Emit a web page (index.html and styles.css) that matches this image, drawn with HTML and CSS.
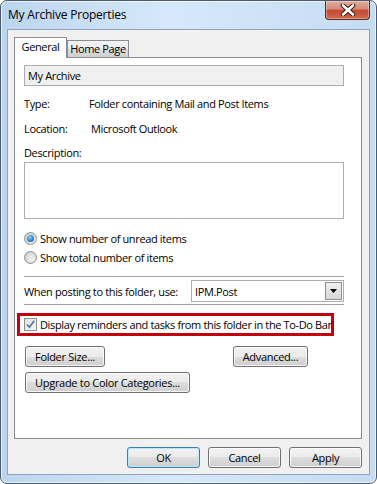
FILE: index.html
```html
<!DOCTYPE html>
<html lang="en">
<head>
    <meta charset="UTF-8">
    <title>My Archive Properties</title>
    <link rel="stylesheet" href="styles.css">
</head>
<body>
    <div class="window">
        <div class="titlebar">
            <span class="title">My Archive Properties</span>
            <div class="close">
                <svg width="18" height="12" viewBox="0 0 18 12">
                    <path d="M4 1.5 L14 10.5 M14 1.5 L4 10.5" stroke="#3c1a14" stroke-width="4.6" stroke-linecap="round"/>
                    <path d="M4 1.5 L14 10.5 M14 1.5 L4 10.5" stroke="#ffffff" stroke-width="2.6" stroke-linecap="round"/>
                </svg>
            </div>
        </div>

        <div class="client">
            <div class="tabs">
                <div class="tab active">General</div>
                <div class="tab">Home Page</div>
            </div>

            <div class="panel">
                <div class="field name">My Archive</div>

                <div class="info first">
                    <span class="label">Type:</span>
                    <span>Folder containing Mail and Post Items</span>
                </div>
                <div class="info">
                    <span class="label">Location:</span>
                    <span class="shift">Microsoft Outlook</span>
                </div>
                <div class="info desc">Description:</div>
                <div class="field textarea"></div>

                <div class="option first-option">
                    <span class="radio checked"></span>
                    <span>Show number of unread items</span>
                </div>
                <div class="option">
                    <span class="radio"></span>
                    <span>Show total number of items</span>
                </div>

                <div class="separator top-sep"></div>
                <div class="posting">
                    <span>When posting to this folder, use:</span>
                    <div class="combo">
                        <span>IPM.Post</span>
                        <span class="combo-btn">
                            <svg width="7" height="4" viewBox="0 0 7 4"><path d="M0 0 H7 L3.5 4 Z" fill="#000"/></svg>
                        </span>
                    </div>
                </div>
                <div class="separator"></div>

                <div class="highlight">
                    <span class="checkbox">
                        <svg width="11" height="11" viewBox="0 0 11 11">
                            <path d="M2 5.5 L4.5 8.2 L9.2 1.8" fill="none" stroke="#5a78a8" stroke-width="1.8"/>
                        </svg>
                    </span>
                    <span>Display reminders and tasks from this folder in the To-Do Bar</span>
                </div>

                <div class="btn-row">
                    <button class="btn folder-size">Folder Size...</button>
                    <button class="btn advanced">Advanced...</button>
                </div>
                <div class="btn-row second">
                    <button class="btn upgrade">Upgrade to Color Categories...</button>
                </div>
            </div>

            <div class="footer">
                <button class="btn dialog default">OK</button>
                <button class="btn dialog">Cancel</button>
                <button class="btn dialog">Apply</button>
            </div>
        </div>
    </div>
</body>
</html>
```

FILE: styles.css
```css
body {
    margin: 0;
    font-family: "Open Sans", "Noto Sans", sans-serif;
    font-size: 11px;
    letter-spacing: -0.36px;
    white-space: nowrap;
    color: #000;
}
.window {
    width: 377px;
    height: 484px;
    box-sizing: border-box;
    border: 1px solid #4a5b6f;
    border-radius: 7px;
    background: linear-gradient(90deg, #bcd5ef 0%, #d6e8fa 45%, #c6dcf3 100%);
    box-shadow: inset 0 0 0 1px rgba(255,255,255,0.7);
    overflow: hidden;
}
.titlebar {
    height: 28px;
    display: flex;
    align-items: flex-start;
    padding-left: 7px;
    padding-right: 6px;
}
.title {
    margin-top: 5px;
    font-size: 12px;
    letter-spacing: -0.2px;
    color: #000;
}
.close {
    margin-left: auto;
    width: 45px;
    height: 19px;
    box-sizing: border-box;
    border: 1px solid #5b2a22;
    border-top: none;
    border-radius: 0 0 4px 4px;
    background: linear-gradient(#e4ab9c 0%, #d38a78 45%, #c4492f 52%, #cf6a4f 100%);
    box-shadow: inset 0 0 0 1px rgba(255,255,255,0.35);
    display: flex;
    align-items: center;
    justify-content: center;
}
.client {
    margin: 0 6px;
    height: 446px;
    box-sizing: border-box;
    border: 1px solid #8fa3bb;
    background: #f0f0f0;
    padding: 7px 7px 0 6px;
}
.tabs {
    display: flex;
    align-items: flex-end;
    height: 20px;
}
.tab {
    box-sizing: border-box;
    height: 17px;
    border: 1px solid #898c95;
    border-bottom: none;
    background: linear-gradient(#f2f2f2 0%, #ebebeb 50%, #dddddd 50%, #cfcfcf 100%);
    line-height: 16px;
    width: 62px;
    text-align: center;
}
.tab.active {
    height: 21px;
    width: 53px;
    margin-bottom: -1px;
    background: #fff;
    position: relative;
    z-index: 1;
    line-height: 18px;
}
.panel {
    height: 382px;
    box-sizing: border-box;
    border: 1px solid #898c95;
    background: #fff;
    padding: 7px 16px 0 9px;
}
.field {
    box-sizing: border-box;
    width: 320px;
    border: 1px solid #abadb3;
}
.name {
    height: 21px;
    background: #f0f0f0;
    padding-left: 3px;
    line-height: 19px;
}
.info {
    display: flex;
    line-height: 15px;
    margin-top: 10px;
}
.label {
    width: 65px;
}
.shift {
    padding-left: 2px;
}
.info.desc {
    margin-top: 9px;
}
.textarea {
    height: 57px;
    margin-top: 2px;
    background: #fff;
}
.option {
    display: flex;
    align-items: center;
    gap: 3px;
    height: 15px;
    margin-top: 4px;
}
.first-option {
    margin-top: 12px;
}
.radio {
    width: 13px;
    height: 13px;
    box-sizing: border-box;
    border-radius: 50%;
    border: 1px solid #8e8f8f;
    background: radial-gradient(circle at 60% 65%, #f4f4f4 0%, #d9d9d9 60%, #c8c8c8 100%);
    display: flex;
    align-items: center;
    justify-content: center;
}
.radio.checked::after {
    content: "";
    width: 7px;
    height: 7px;
    border-radius: 50%;
    background: radial-gradient(circle at 40% 35%, #9fd2f5 0%, #2a84c9 55%, #0d4f8d 100%);
}
.separator {
    width: 320px;
    height: 1px;
    background: #a0a0a0;
    margin-top: 2px;
}
.separator.top-sep {
    margin-top: 11px;
}
.posting {
    display: flex;
    align-items: center;
    justify-content: space-between;
    width: 320px;
    margin-top: 3px;
}
.combo {
    width: 153px;
    height: 22px;
    box-sizing: border-box;
    border: 1px solid #abadb3;
    display: flex;
    align-items: center;
    padding-left: 3px;
    padding-right: 1px;
}
.combo-btn {
    margin-left: auto;
    width: 17px;
    height: 18px;
    box-sizing: border-box;
    border: 1px solid #8f8f8f;
    background: linear-gradient(#f0f0f0, #d8d8d8);
    display: flex;
    align-items: center;
    justify-content: center;
}
.highlight {
    display: flex;
    align-items: center;
    gap: 3px;
    width: 317px;
    height: 23px;
    box-sizing: border-box;
    border: 3px solid #c4000c;
    margin-top: 8px;
    margin-left: -7px;
    padding-left: 4px;
}
.checkbox {
    width: 13px;
    height: 13px;
    box-sizing: border-box;
    border: 1px solid #8f8f8f;
    background: linear-gradient(135deg, #e2e2e2, #f8f8f8);
    display: flex;
    align-items: center;
    justify-content: center;
}
.btn {
    font-family: inherit;
    font-size: 11px;
    letter-spacing: -0.3px;
    color: #000;
    height: 21px;
    box-sizing: border-box;
    border: 1px solid #707070;
    border-radius: 3px;
    background: linear-gradient(#f2f2f2 0%, #ebebeb 50%, #dddddd 50%, #cfcfcf 100%);
    box-shadow: inset 0 0 0 1px rgba(255,255,255,0.8);
    padding: 0 6px;
    white-space: nowrap;
    cursor: pointer;
}
.btn-row {
    display: flex;
    margin-top: 10px;
    padding-left: 1px;
}
.btn-row.second {
    margin-top: 5px;
}
.folder-size {
    width: 80px;
}
.advanced {
    width: 75px;
    margin-left: 128px;
}
.upgrade {
    width: 165px;
}
.footer {
    display: flex;
    justify-content: flex-end;
    gap: 8px;
    margin-top: 8px;
}
.dialog {
    width: 73px;
}
.default {
    border-color: #3c7fb1;
    box-shadow: inset 0 0 0 1px #bde4f8;
}
```
